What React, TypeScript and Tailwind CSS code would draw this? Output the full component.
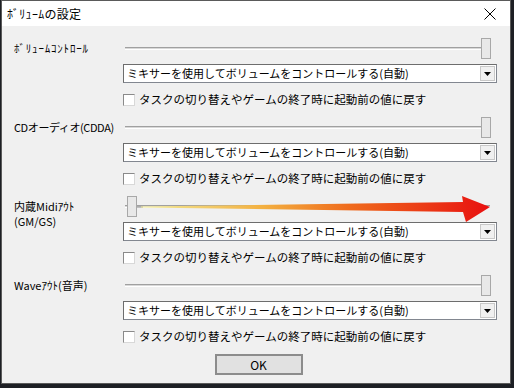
import React from "react";

const font = {
  fontFamily: '"Noto Sans CJK JP", "Liberation Sans", sans-serif',
};

const OPTION = "ミキサーを使用してボリュームをコントロールする(自動)";
const RESTORE = "タスクの切り替えやゲームの終了時に起動前の値に戻す";

function Slider({ thumb }: { thumb: "left" | "right" }) {
  return (
    <div className="relative h-[20px] w-[374px]">
      {/* track */}
      <div className="absolute left-[2px] right-[7px] top-[9px] h-[3px] border-t border-[#a0a0a0] border-b border-b-white bg-[#d8d8d8]" />
      <div
        className={`absolute top-0 h-[21px] w-[10px] border border-[#a8a8a8] bg-[#e8e8e8] ${
          thumb === "right" ? "right-[6px]" : "left-[4px]"
        }`}
      />
    </div>
  );
}

function Dropdown() {
  return (
    <div className="flex h-[19px] w-[374px] items-center border border-[#828790] border-t-[#6d6d6d] border-l-[#6d6d6d] bg-white">
      <span className="flex-1 whitespace-nowrap pl-[3px] text-[11px] leading-none text-black">
        {OPTION}
      </span>
      <div className="mr-[1px] flex h-[15px] w-[15px] items-center justify-center border border-[#c8c8c8] bg-[#f0f0f0]">
        <svg width="7" height="4" viewBox="0 0 7 4">
          <polygon points="0,0 7,0 3.5,4" fill="#000" />
        </svg>
      </div>
    </div>
  );
}

function Check() {
  return (
    <div className="flex h-[14px] items-center gap-[4px]">
      <div className="h-[12px] w-[12px] shrink-0 border border-[#8a8a8a] border-b-[#d8d8d8] border-r-[#d8d8d8] bg-white" />
      <span className="whitespace-nowrap text-[11.5px] leading-none text-black">
        {RESTORE}
      </span>
    </div>
  );
}

function Section({
  label,
  thumb = "right",
  arrow = false,
}: {
  label: React.ReactNode;
  thumb?: "left" | "right";
  arrow?: boolean;
}) {
  return (
    <div className="flex">
      <div className="w-[121px] shrink-0 whitespace-nowrap pl-[12px] pt-[3px] text-[11px] leading-[15px] text-black">
        {label}
      </div>
      <div className="flex shrink-0 flex-col">
        <div className="relative">
          <Slider thumb={thumb} />
          {arrow && (
            <svg
              className="absolute left-0 top-0 overflow-visible"
              width="374"
              height="20"
            >
              <defs>
                <linearGradient id="arr" x1="0" y1="0" x2="1" y2="0">
                  <stop offset="0" stopColor="#f2ec9a" />
                  <stop offset="0.35" stopColor="#f3b040" />
                  <stop offset="0.6" stopColor="#ef6a1c" />
                  <stop offset="1" stopColor="#e81010" />
                </linearGradient>
              </defs>
              <line x1="14" y1="11" x2="20" y2="11" stroke="#808080" strokeWidth="1" />
              <polygon
                points="18,10.5 340,6 339,0 367,11 343,26 340,16 18,11.5"
                fill="url(#arr)"
              />
            </svg>
          )}
        </div>
        <div className="mt-[6px]">
          <Dropdown />
        </div>
        <div className="mt-[10px]">
          <Check />
        </div>
      </div>
    </div>
  );
}

export default function App() {
  return (
    <div className="h-[388px] w-[514px] bg-[#1d1f24] pl-[1px]" style={font}>
      <div className="flex h-[384px] w-[510px] flex-col border border-[#5a5a5a] bg-[#f0f0f0]">
        {/* title bar */}
        <div className="flex h-[25px] items-center justify-between bg-white pl-[5px] pr-[14px]">
          <span className="text-[12px] tracking-[0.3px] text-black">ﾎﾞﾘｭｰﾑの設定</span>
          <svg width="12" height="12" viewBox="0 0 12 12">
            <path d="M0.5 0.5L11.5 11.5M11.5 0.5L0.5 11.5" stroke="#000" strokeWidth="1" />
          </svg>
        </div>

        <div className="flex flex-col gap-[10px] pt-[12px]">
          <Section label={<span className="tracking-[0.8px]">ﾎﾞﾘｭｰﾑｺﾝﾄﾛｰﾙ</span>} />
          <Section label={<span className="tracking-[-0.4px]">CDオーディオ(CDDA)</span>} />
          <Section
            thumb="left"
            arrow
            label={
              <>
                <div>内蔵Midiｱｳﾄ</div>
                <div>(GM/GS)</div>
              </>
            }
          />
          <Section label="Waveｱｳﾄ(音声)" />
        </div>

        <div className="mt-[10px] flex justify-center pl-[5px]">
          <button className="h-[21px] w-[88px] border-2 border-[#8c8c8c] bg-[#e1e1e1] text-[12px] text-black">
            OK
          </button>
        </div>
      </div>
    </div>
  );
}
